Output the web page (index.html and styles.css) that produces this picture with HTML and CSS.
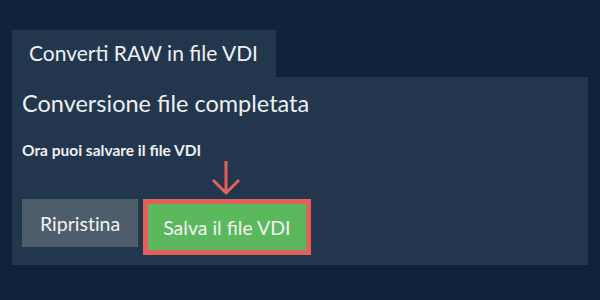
FILE: index.html
```html
<!DOCTYPE html>
<html lang="it">
<head>
    <meta charset="UTF-8">
    <title>Converti RAW in file VDI</title>
    <link rel="stylesheet" href="styles.css">
</head>
<body>

<div class="tab">Conver&zwnj;ti RAW in file VDI</div>

<div class="panel">
    <h2>Conversione file completata</h2>
    <p class="info">Ora puoi salvare il file VDI</p>
    <div class="actions">
        <button class="btn btn-reset">Riprist&zwnj;ina</button>
        <div class="highlight">
            <svg class="arrow" width="30" height="36" viewBox="0 0 30 36">
                <path d="M15 1 V33 M2 20 L15 33 L28 20" fill="none" stroke="#e0605b" stroke-width="3"/>
            </svg>
            <button class="btn btn-save">Salva il file VDI</button>
        </div>
    </div>
</div>

</body>
</html>
```

FILE: styles.css
```css
body {
    font-family: Lato, 'Noto Sans', sans-serif;
    margin: 0;
    padding: 30px 12px 0 12px;
    background-color: #11233a;
    color: #eef0f2;
}

.tab {
    display: inline-block;
    background-color: #22374d;
    font-size: 21px;
    padding: 9px 18px 11px 17px;
    line-height: 27px;
}

.panel {
    background-color: #22374d;
    padding: 12px 10px 10px 10px;
}

h2 {
    font-size: 23.5px;
    font-weight: normal;
    margin: 0;
    line-height: 28px;
}

.info {
    font-size: 15.5px;
    font-weight: bold;
    margin: 24px 0 0 0;
}

.actions {
    display: flex;
    align-items: flex-start;
    gap: 5px;
    margin-top: 40px;
}

.btn {
    font-family: Lato, 'Noto Sans', sans-serif;
    font-size: 19.5px;
    color: #f2f4f4;
    border: none;
    cursor: pointer;
    height: 48px;
    padding: 0 18px;
}

.btn-reset {
    background-color: #4e5d6c;
}

.highlight {
    position: relative;
    border: 5px solid #e0605b;
}

.btn-save {
    display: block;
    background-color: #5cb85c;
    height: 46px;
    padding: 0 15px;
}

.arrow {
    position: absolute;
    left: 63px;
    top: -44px;
}
```
